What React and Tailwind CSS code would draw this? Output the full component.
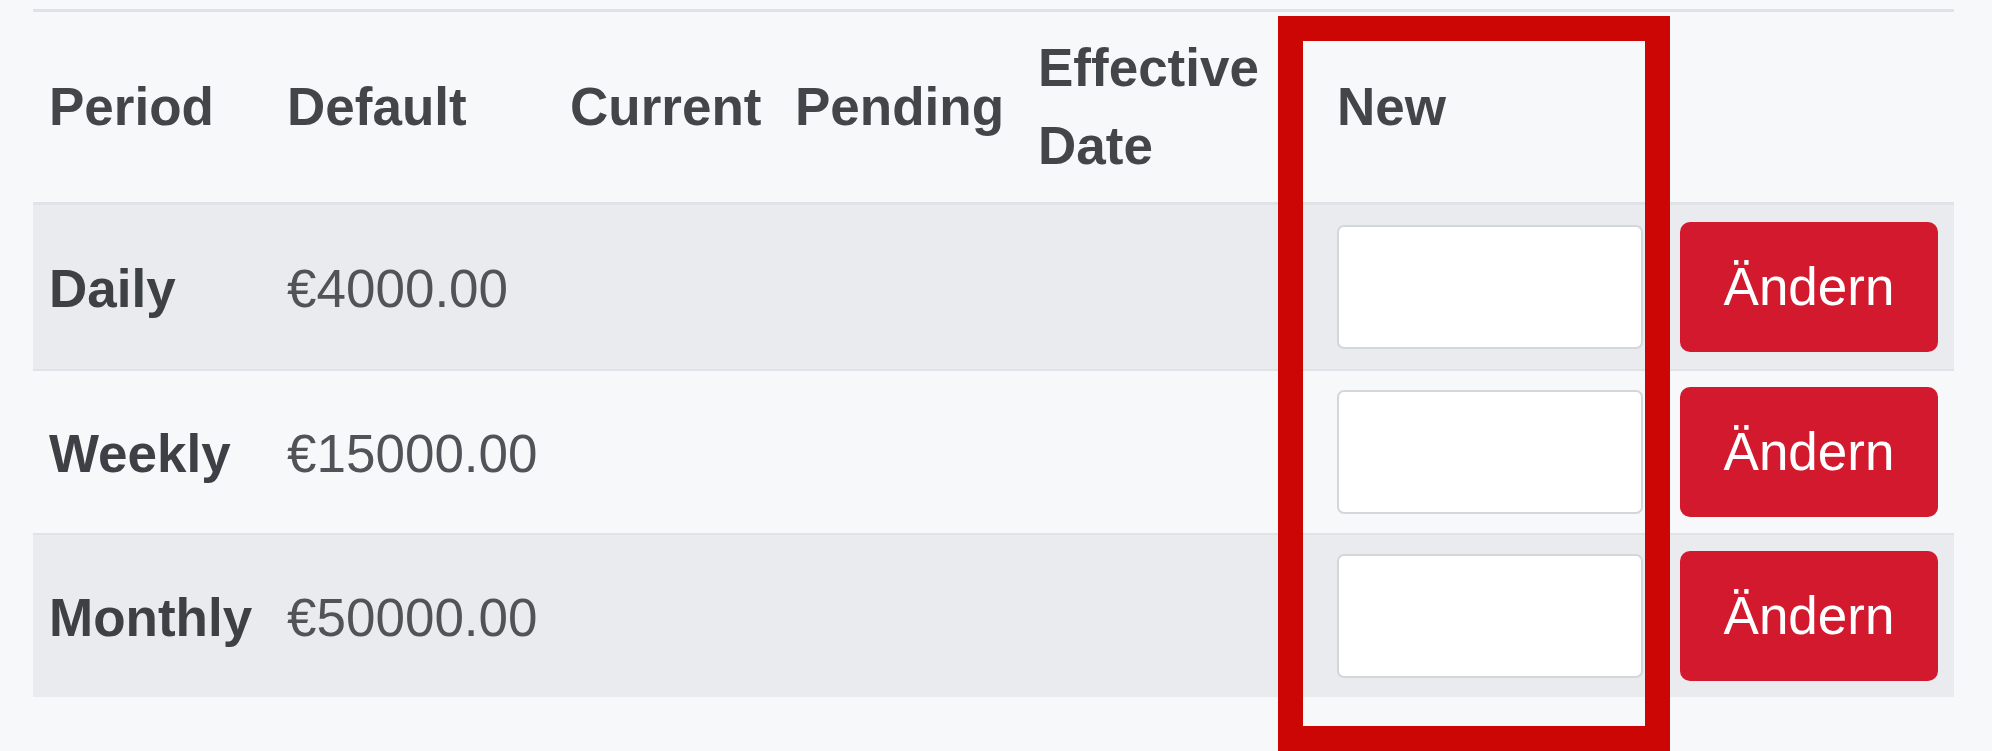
import React from "react";

const rows = [
  { period: "Daily", def: "€4000.00", bg: "bg-[#e9ebee]" },
  { period: "Weekly", def: "€15000.00", bg: "bg-[#f7f8fa]" },
  { period: "Monthly", def: "€50000.00", bg: "bg-[#e9ebee]" },
];

const cols = "grid grid-cols-[238px_283px_225px_243px_299px_341px_294px]";

export default function App() {
  return (
    <div
      className="relative h-[751px] w-[1992px] overflow-hidden bg-[#f7f8fa] pt-[9px] pl-[33px]"
      style={{ fontFamily: '"Liberation Sans", Arial, sans-serif' }}
    >
      <div className="w-[1921px] border-t-[3px] border-[#dfe2e6]">
        {/* header */}
        <div className={`${cols} h-[193px] items-center border-b-[3px] border-[#dfe2e6] text-[53px] font-bold leading-[78px] text-[#434649]`}>
          <div className="px-4">Period</div>
          <div className="px-4">Default</div>
          <div className="px-4">Current</div>
          <div className="px-4">Pending</div>
          <div className="px-4">
            Effective
            <br />
            Date
          </div>
          <div className="px-4">New</div>
          <div className="px-4"></div>
        </div>
        {rows.map((r, i) => (
          <div
            key={r.period}
            className={`${cols} h-[164px] items-center ${i > 0 ? "border-t-2 border-[#dfe2e6]" : ""} ${r.bg} text-[53px] leading-[78px]`}
          >
            <div className="px-4 pt-[4px] font-bold text-[#3d4044]">{r.period}</div>
            <div className="px-4 pt-[4px] text-[#505357]">{r.def}</div>
            <div className="px-4"></div>
            <div className="px-4"></div>
            <div className="px-4"></div>
            <div className="pl-[16px]">
              <div className="h-[124px] w-[306px] rounded-[7px] border-2 border-[#d3d6da] bg-white"></div>
            </div>
            <div className="pl-[18px]">
              <button className="flex h-[130px] w-[258px] items-center justify-center rounded-[10px] bg-[#d3192e] text-[53px] text-white">
                Ändern
              </button>
            </div>
          </div>
        ))}
      </div>
      {/* annotation box */}
      <div className="absolute left-[1278px] top-[16px] h-[735px] w-[392px] border-[25px] border-[#cc0505]"></div>
    </div>
  );
}
